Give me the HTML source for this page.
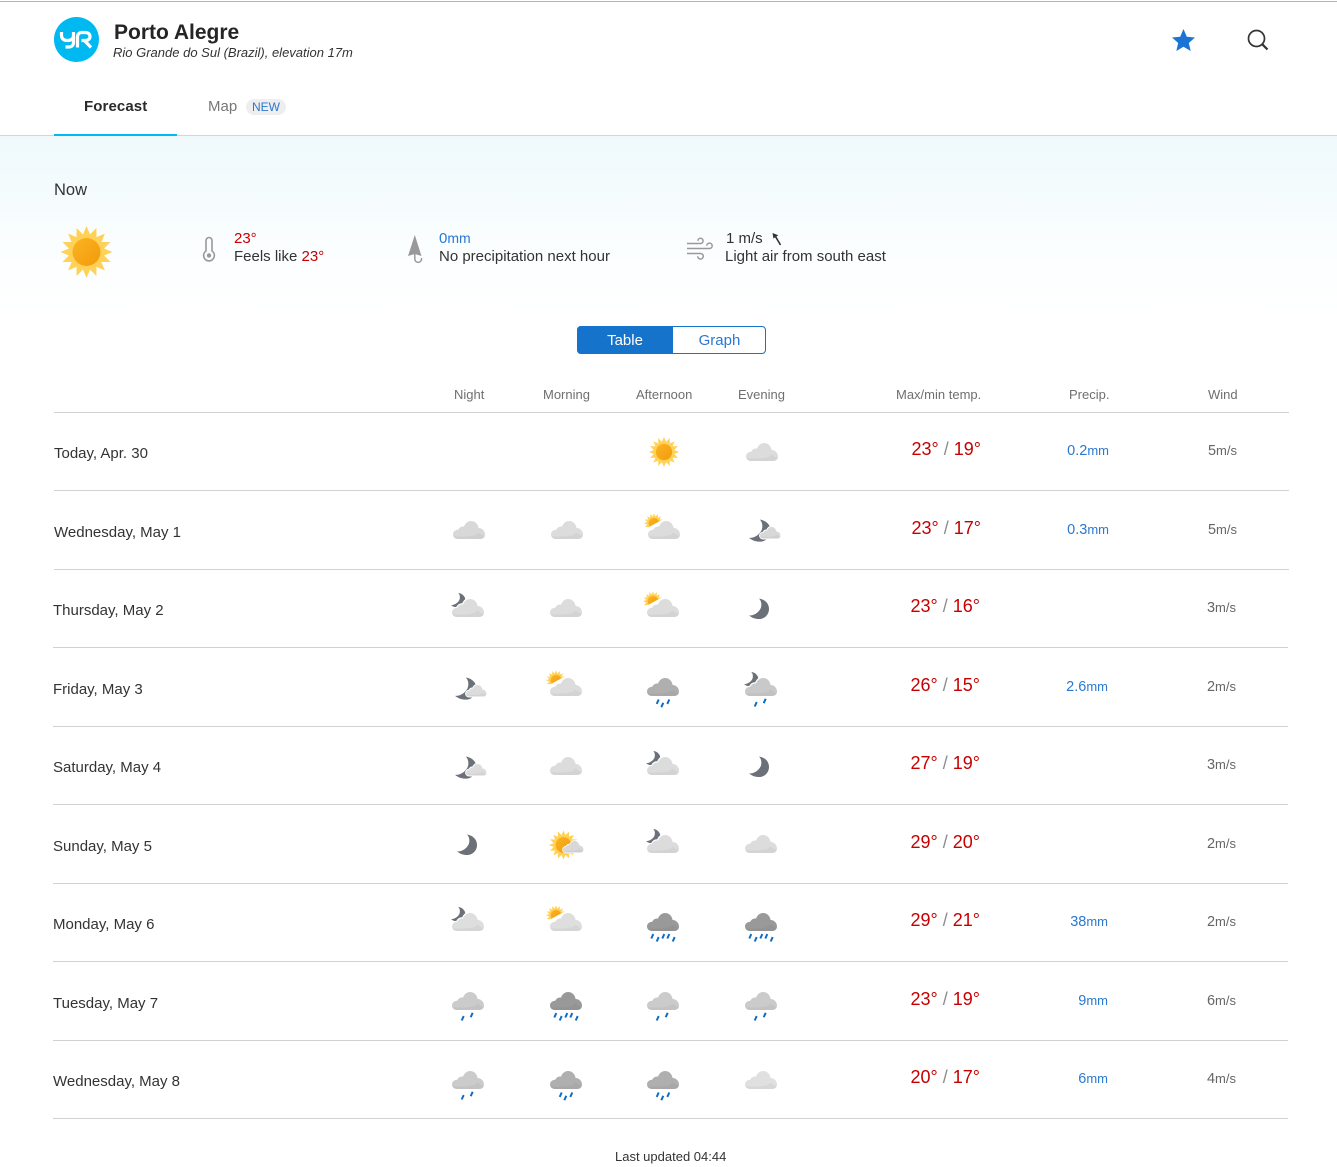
<!DOCTYPE html>
<html lang="en"><head><meta charset="utf-8"><title>Porto Alegre</title>
<style>
html,body{margin:0;padding:0;background:#fff}
body{width:1337px;height:1167px;position:relative;overflow:hidden;font-family:"Liberation Sans",Arial,sans-serif;color:#2b2b2b}
div,span.a{position:absolute;white-space:nowrap}
.bg{left:0;top:136px;width:1337px;height:180px;background:linear-gradient(#eff9fc,#fbfeff 65%,#fff)}
.ln{height:1px;background:#d2d2d2}
.h{font-size:13px;color:#6f6f6f;line-height:16px;top:387px}
.lab{font-size:15px;line-height:20px;color:#333}
.t{font-size:18px;line-height:22px;color:#c60000;text-align:right;width:100px}
.t i{font-style:normal;color:#8c8c8c}
.p{font-size:14.5px;line-height:18px;color:#2a78d0;text-align:right;width:80px}
.w{font-size:14.5px;line-height:18px;color:#666;text-align:right;width:60px}
small{font-size:13px}
svg{position:absolute;left:0;top:0}
</style></head><body>
<div style="left:0;top:1px;width:1337px;height:1px;background:#b4b4b4"></div>
<div class="bg"></div>
<div class="ln" style="left:0;top:135px;width:1337px;background:#d6d6d6"></div>
<div style="left:54px;top:134px;width:123px;height:2px;background:#00b9f1"></div>

<div style="left:114px;top:20px;font-size:21px;line-height:26px;font-weight:bold;color:#252525">Porto Alegre</div>
<div style="left:113px;top:44px;font-size:13px;line-height:18px;font-style:italic;color:#333">Rio Grande do Sul (Brazil), elevation 17m</div>
<div style="left:84px;top:98px;font-size:15px;line-height:18px;font-weight:bold;letter-spacing:.1px;color:#2a2a2a">Forecast</div>
<div style="left:208px;top:98px;font-size:15px;line-height:18px;color:#777">Map</div>
<div style="left:246px;top:99px;width:40px;height:16px;border-radius:8px;background:#eee;color:#2a78d0;font-size:12px;line-height:16px;text-align:center">NEW</div>

<div style="left:54px;top:180px;font-size:16.5px;line-height:20px;color:#333">Now</div>
<div style="left:234px;top:230px;font-size:15px;line-height:18px;color:#c60000">23°</div>
<div style="left:234px;top:248px;font-size:15px;line-height:18px;color:#333">Feels like <span style="color:#c60000">23°</span></div>
<div style="left:439px;top:229px;font-size:15px;line-height:18px;color:#2a78d0">0<small style="font-size:14px">mm</small></div>
<div style="left:439px;top:248px;font-size:15px;line-height:18px;color:#333">No precipitation next hour</div>
<div style="left:726px;top:230px;font-size:15px;line-height:18px;color:#333">1 m/s</div>
<div style="left:725px;top:248px;font-size:15px;line-height:18px;color:#333">Light air from south east</div>

<div style="left:577px;top:326px;width:187px;height:26px;border:1px solid #1673cc;border-radius:4px"></div>
<div style="left:577px;top:326px;width:96px;height:28px;background:#1673cc;border-radius:4px 0 0 4px;color:#fff;font-size:15px;line-height:30px;text-align:center">Table</div>
<div style="left:673px;top:326px;width:93px;height:28px;color:#2a78d0;font-size:15px;line-height:30px;text-align:center">Graph</div>

<div class="h" style="left:454px">Night</div>
<div class="h" style="left:543px">Morning</div>
<div class="h" style="left:636px">Afternoon</div>
<div class="h" style="left:738px">Evening</div>
<div class="h" style="left:896px">Max/min temp.</div>
<div class="h" style="left:1069px">Precip.</div>
<div class="h" style="left:1208px">Wind</div>

<div class="ln" style="left:54px;top:412px;width:1235px"></div>
<div class="ln" style="left:54px;top:490px;width:1235px"></div>
<div class="ln" style="left:54px;top:569px;width:1235px"></div>
<div class="ln" style="left:53px;top:647px;width:1235px"></div>
<div class="ln" style="left:53px;top:726px;width:1235px"></div>
<div class="ln" style="left:53px;top:804px;width:1235px"></div>
<div class="ln" style="left:53px;top:883px;width:1235px"></div>
<div class="ln" style="left:53px;top:961px;width:1235px"></div>
<div class="ln" style="left:53px;top:1040px;width:1235px"></div>
<div class="ln" style="left:53px;top:1118px;width:1235px"></div>

<div class="lab" style="left:54px;top:444px">Today, Apr. 30</div>
<div class="lab" style="left:54px;top:523px">Wednesday, May 1</div>
<div class="lab" style="left:53px;top:601px">Thursday, May 2</div>
<div class="lab" style="left:53px;top:680px">Friday, May 3</div>
<div class="lab" style="left:53px;top:758px">Saturday, May 4</div>
<div class="lab" style="left:53px;top:837px">Sunday, May 5</div>
<div class="lab" style="left:53px;top:915px">Monday, May 6</div>
<div class="lab" style="left:53px;top:994px">Tuesday, May 7</div>
<div class="lab" style="left:53px;top:1072px">Wednesday, May 8</div>

<div class="t" style="left:881px;top:438px">23° <i>/</i> 19°</div>
<div class="t" style="left:881px;top:517px">23° <i>/</i> 17°</div>
<div class="t" style="left:880px;top:595px">23° <i>/</i> 16°</div>
<div class="t" style="left:880px;top:674px">26° <i>/</i> 15°</div>
<div class="t" style="left:880px;top:752px">27° <i>/</i> 19°</div>
<div class="t" style="left:880px;top:831px">29° <i>/</i> 20°</div>
<div class="t" style="left:880px;top:909px">29° <i>/</i> 21°</div>
<div class="t" style="left:880px;top:988px">23° <i>/</i> 19°</div>
<div class="t" style="left:880px;top:1066px">20° <i>/</i> 17°</div>

<div class="p" style="left:1029px;top:442px">0.2<small>mm</small></div>
<div class="p" style="left:1029px;top:521px">0.3<small>mm</small></div>
<div class="p" style="left:1028px;top:678px">2.6<small>mm</small></div>
<div class="p" style="left:1028px;top:913px">38<small>mm</small></div>
<div class="p" style="left:1028px;top:992px">9<small>mm</small></div>
<div class="p" style="left:1028px;top:1070px">6<small>mm</small></div>

<div class="w" style="left:1177px;top:442px">5<small>m/s</small></div>
<div class="w" style="left:1177px;top:521px">5<small>m/s</small></div>
<div class="w" style="left:1176px;top:599px">3<small>m/s</small></div>
<div class="w" style="left:1176px;top:678px">2<small>m/s</small></div>
<div class="w" style="left:1176px;top:756px">3<small>m/s</small></div>
<div class="w" style="left:1176px;top:835px">2<small>m/s</small></div>
<div class="w" style="left:1176px;top:913px">2<small>m/s</small></div>
<div class="w" style="left:1176px;top:992px">6<small>m/s</small></div>
<div class="w" style="left:1176px;top:1070px">4<small>m/s</small></div>

<div style="left:615px;top:1149px;font-size:13px;line-height:16px;color:#333">Last updated 04:44</div>

<svg width="1337" height="1167" viewBox="0 0 1337 1167">
<defs>
<linearGradient id="og" x1="0" y1="0" x2="1" y2="1"><stop offset="0" stop-color="#fbb422"/><stop offset="1" stop-color="#f29a0c"/></linearGradient>
<path id="cp" d="M5 18C2 18 0 16 0 13.5 0 10.5 2.5 9 5.2 8.8 6.5 6.2 8.8 5.2 11 5.6 12.3 2 15 0 18 0 22 0 25 3 25.6 7 29.2 7 32 10 32 13.5 32 16 30 18 27.5 18Z"/>
<g id="c"><use href="#cp" fill="currentColor"/><path d="M.5 15.2C1.3 17 3 18 5 18H27.5C29.7 18 31.4 16.6 31.9 14.6 29 15 27.5 12.5 25 11.5 24 13.5 22 14.5 20 14.5 14 16 6 15.5.5 15.2Z" fill="#000" opacity=".04"/></g>
<g id="cw"><use href="#cp" fill="#fff" stroke="#fff" stroke-width="2.4"/><use href="#c"/></g>
<g id="sun"><g fill="#ffd257"><path id="ra" d="M-5-14L0-26 5-14Z"/><use href="#ra" transform="rotate(22.5)"/><use href="#ra" transform="rotate(45)"/><use href="#ra" transform="rotate(67.5)"/><use href="#ra" transform="rotate(90)"/><use href="#ra" transform="rotate(112.5)"/><use href="#ra" transform="rotate(135)"/><use href="#ra" transform="rotate(157.5)"/><use href="#ra" transform="rotate(180)"/><use href="#ra" transform="rotate(202.5)"/><use href="#ra" transform="rotate(225)"/><use href="#ra" transform="rotate(247.5)"/><use href="#ra" transform="rotate(270)"/><use href="#ra" transform="rotate(292.5)"/><use href="#ra" transform="rotate(315)"/><use href="#ra" transform="rotate(337.5)"/><circle r="17.5"/></g><circle r="14" fill="url(#og)"/></g>
<path id="m" fill="#6b7079" d="M10 .5C16 1.5 20 5.5 20 11 20 16.7 15.5 21 10 21 6 21 3 19.8 0 17.5 5 17.8 9.5 14.5 11.6 10.5 13 7 12.5 3 10 .5Z"/>
<clipPath id="sc"><polygon points="-12,13 -12,-15 30,-15 17,-2.7"/></clipPath>
<g id="sc1"><g clip-path="url(#sc)"><use href="#sun" transform="translate(6 2.3) scale(.38)"/></g><use href="#cw"/></g>
<g id="mc1"><use href="#m" transform="translate(-1 -6.5) scale(.72)"/><use href="#cw"/></g>
<g id="mc2"><use href="#m" transform="scale(1.08)"/><g transform="translate(11 8) scale(.64)"><use href="#cp" fill="#fff" stroke="#fff" stroke-width="3"/><use href="#c"/></g></g>
<g id="d2" stroke="#0f6cc4" stroke-width="2"><path d="M9.7 28.5L11.7 24.1M18.7 25.2L20.7 20.8"/></g>
<g id="d3" stroke="#0f6cc4" stroke-width="2"><path d="M9.7 25.9L11.7 21.5M14.3 29.2L16.3 24.8M20.3 25.9L22.3 21.5"/></g>
<g id="d5" stroke="#0f6cc4" stroke-width="2"><path d="M4.3 25.5L6.3 21.1M9.7 28.5L11.7 24.1M15.3 25.5L17.3 21.1M20.3 25.5L22.3 21.1M25.7 28.5L27.7 24.1"/></g>
</defs>

<circle cx="76.5" cy="39.5" r="22.5" fill="#00b9f1"/>
<g fill="none" stroke="#fff" stroke-width="3.2" stroke-linejoin="round"><path d="M61.5 32V35.5C61.5 38.7 63.8 40.5 67.5 40.5S73.5 38.7 73.5 35.5V32M73.5 35V42.5C73.5 45.5 71.5 47 68.5 47H65.5"/><path d="M77.5 47.5V37C77.5 34 79.5 32.5 82 32.5H85C88 32.5 90 34 90 36.5S88 40.5 85 40.5H81.5M84.5 40.5L91 47.5"/></g>
<path fill="#1b74d3" d="M1183.5 29L1186.8 36.8 1195 37.5 1188.8 43 1190.7 51 1183.5 46.8 1176.3 51 1178.2 43 1172 37.5 1180.2 36.8Z"/>
<g fill="none" stroke="#333" stroke-width="1.7"><circle cx="1256.5" cy="38.5" r="8"/><path d="M1262.3 44.3L1267.5 49.5" stroke-width="2.2"/></g>

<use href="#sun" transform="translate(86.5 252)"/>
<g fill="none" stroke="#999" stroke-width="1.6"><path d="M206 251V240.5A3 3 0 0 1 212 240.5V251A5.4 5.4 0 1 1 206 251Z"/></g><circle cx="209" cy="255.5" r="2.2" fill="#999"/>
<path fill="#999" d="M414.8 235L421.5 256 414.8 254 408 256Z"/><path fill="none" stroke="#999" stroke-width="1.5" d="M414.8 254V259A3.2 3.2 0 0 0 421.5 259V258"/>
<g fill="none" stroke="#999" stroke-width="1.5"><path d="M687 243.5H700.5A2.6 2.6 0 1 0 697.9 240.9M687 248.5H709.5A2.7 2.7 0 1 0 706.8 245.8M687 253.5H700.5A2.8 2.8 0 1 1 697.7 256.3"/></g>
<path stroke="#333" stroke-width="1.6" d="M780.5 245L775.5 236.5"/><polygon fill="#333" points="772.5,233 778.3,235.2 773.4,238.5"/>

<use href="#sun" transform="translate(664 452) scale(.58)"/>
<use href="#c" x="746" y="443" style="color:#dcdcdc"/>

<use href="#c" x="453" y="521" style="color:#d8d8d8"/>
<use href="#c" x="551" y="521" style="color:#dcdcdc"/>
<use href="#sc1" x="648" y="521" style="color:#dcdcdc"/>
<use href="#mc2" x="749" y="519" style="color:#d8d8d8"/>

<use href="#mc1" x="452" y="599" style="color:#dcdcdc"/>
<use href="#c" x="550" y="599" style="color:#dcdcdc"/>
<use href="#sc1" x="647" y="599" style="color:#dcdcdc"/>
<use href="#m" x="749" y="598"/>

<use href="#mc2" x="455" y="677" style="color:#dcdcdc"/>
<use href="#sc1" x="550" y="678" style="color:#dcdcdc"/>
<use href="#c" x="647" y="678" style="color:#afafaf"/><use href="#d3" x="647" y="678"/>
<use href="#mc1" x="745" y="678" style="color:#c9c9c9"/><use href="#d2" x="745" y="678"/>

<use href="#mc2" x="455" y="756" style="color:#dcdcdc"/>
<use href="#c" x="550" y="757" style="color:#dcdcdc"/>
<use href="#mc1" x="647" y="757" style="color:#dcdcdc"/>
<use href="#m" x="749" y="756"/>

<use href="#m" x="457" y="834"/>
<use href="#sun" transform="translate(563.5 845) scale(.56)"/><g transform="translate(563 841) scale(.64)" style="color:#d8d8d8"><use href="#cw"/></g>
<use href="#mc1" x="647" y="835" style="color:#dcdcdc"/>
<use href="#c" x="745" y="835" style="color:#dcdcdc"/>

<use href="#mc1" x="452" y="913" style="color:#dedede"/>
<use href="#sc1" x="550" y="913" style="color:#dedede"/>
<use href="#c" x="647" y="913" style="color:#999"/><use href="#d5" x="647" y="913"/>
<use href="#c" x="745" y="913" style="color:#999"/><use href="#d5" x="745" y="913"/>

<use href="#c" x="452" y="992" style="color:#cbcbcb"/><use href="#d2" x="452" y="992"/>
<use href="#c" x="550" y="992" style="color:#999"/><use href="#d5" x="550" y="992"/>
<use href="#c" x="647" y="992" style="color:#cbcbcb"/><use href="#d2" x="647" y="992"/>
<use href="#c" x="745" y="992" style="color:#cbcbcb"/><use href="#d2" x="745" y="992"/>

<use href="#c" x="452" y="1071" style="color:#cbcbcb"/><use href="#d2" x="452" y="1071"/>
<use href="#c" x="550" y="1071" style="color:#afafaf"/><use href="#d3" x="550" y="1071"/>
<use href="#c" x="647" y="1071" style="color:#afafaf"/><use href="#d3" x="647" y="1071"/>
<use href="#c" x="745" y="1071" style="color:#e0e0e0"/>
</svg>
</body></html>
